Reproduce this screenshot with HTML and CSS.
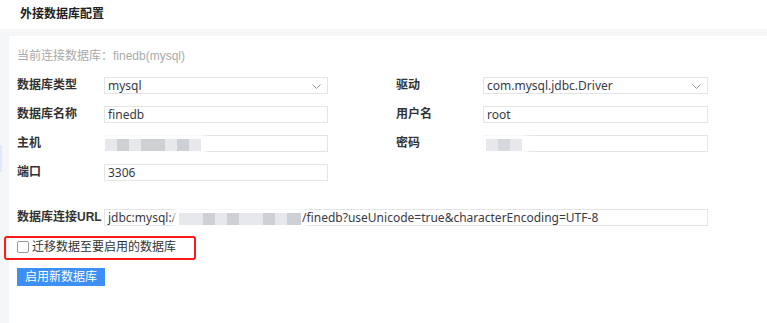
FILE: index.html
```html
<!doctype html>
<html>
<head>
<meta charset="utf-8">
<title>外接数据库配置</title>
<link rel="stylesheet" href="styles.css">
</head>
<body>
<div class="head">外接数据库配置</div>
<div class="wrap">
  <div class="side"><div class="side-mark"></div></div>
  <div class="panel">
    <div class="current">当前连接数据库：finedb(mysql)</div>
    <div class="form">
      <div class="lab">数据库类型</div>
      <div class="field sel">mysql<svg class="arrow" width="9" height="5" viewBox="0 0 9 5"><polyline points="0.5,0.5 4.5,4.5 8.5,0.5" fill="none" stroke="#9a9aa3" stroke-width="1"/></svg></div>
      <div></div>
      <div class="lab">驱动</div>
      <div class="field sel">com.mysql.jdbc.Driver<svg class="arrow" width="9" height="5" viewBox="0 0 9 5"><polyline points="0.5,0.5 4.5,4.5 8.5,0.5" fill="none" stroke="#9a9aa3" stroke-width="1"/></svg></div>

      <div class="lab">数据库名称</div>
      <div class="field">finedb</div>
      <div></div>
      <div class="lab">用户名</div>
      <div class="field">root</div>

      <div class="lab">主机</div>
      <div class="field"><span class="mosaic m-host"><i class="c1"></i><i class="c2"></i><i class="c1"></i><i class="c2"></i><i class="c2"></i><i class="c1"></i><i class="c3"></i><i class="c1"></i></span></div>
      <div></div>
      <div class="lab">密码</div>
      <div class="field"><span class="mosaic m-pass"><i class="c1"></i><i class="c4"></i><i class="c1"></i></span></div>

      <div class="lab">端口</div>
      <div class="field">3306</div>
    </div>
    <div class="form url-row">
      <div class="lab">数据库连接URL</div>
      <div class="field wide">jdbc:mysql:/<span class="mosaic m-url"><i class="c1"></i><i class="c1"></i><i class="c2"></i><i class="c1"></i><i class="c2"></i><i class="c1"></i><i class="c1"></i><i class="c2"></i><i class="c1"></i><i class="c3"></i></span>/finedb?useUnicode=true&amp;characterEncoding=UTF-8</div>
    </div>
    <div class="check-row">
      <span class="box"></span>迁移数据至要启用的数据库
      <div class="mark"></div>
    </div>
    <div class="btn">启用新数据库</div>
  </div>
</div>
</body>
</html>
```
FILE: styles.css
```css
body{
  margin:0;
  background:#f5f6f8;
  font-family:"Liberation Sans","Noto Sans CJK SC",sans-serif;
  font-size:12px;
  color:#333;
}
.head{
  height:29px;
  line-height:28px;
  padding-left:20px;
  background:#fff;
  font-weight:bold;
  color:#222;
}
.wrap{
  display:flex;
  margin-top:7px;
  height:287px;
}
.side{
  width:9px;
  flex:none;
}
.side-mark{
  width:2px;
  height:27px;
  margin-top:109px;
  background:#deeafb;
}
.panel{
  flex:1;
  background:#fff;
  padding:12px 8px 0 8px;
  position:relative;
}
.current{
  color:#aaa;
  line-height:17px;
}
.form{
  display:grid;
  grid-template-columns:87px 224px 68px 87px 225px;
  grid-auto-rows:17px;
  row-gap:12px;
  margin-top:12px;
}
.url-row{
  margin-top:28px;
}
.lab{
  font-weight:bold;
  color:#333;
  line-height:17px;
}
.field{
  box-sizing:border-box;
  border:1px solid #e3e5e9;
  padding:0 3px;
  line-height:15px;
  white-space:nowrap;
  position:relative;
  display:flex;
  align-items:center;
  color:#3a3a45;
  font-family:"Noto Sans","Noto Sans CJK SC",sans-serif;
  font-size:12px;
}
.wide{
  grid-column:2 / 6;
}
.arrow{
  position:absolute;
  right:6px;
  top:6px;
}
.mosaic{
  display:inline-flex;
  height:12px;
  margin-top:2px;
  box-shadow:0 0 5px 5px #fff;
  background:#fff;
}
.mosaic i{
  width:12px;
  height:12px;
  display:block;
}
.m-host{
  margin-left:-3px;
}
.m-pass{
  margin-left:-1px;
}
.m-url{
  margin:2px 1px 0 3px;
}
.m-url i:last-child{
  width:14px;
}
.c1{background:#e7e8eb;}
.c2{background:#cfd0d4;}
.c3{background:#cdd0d7;}
.c4{background:#d7d8dd;}
.check-row{
  margin-top:15px;
  height:12px;
  display:flex;
  align-items:center;
  line-height:12px;
  position:relative;
}
.box{
  box-sizing:border-box;
  width:12px;
  height:12px;
  border:1px solid #9b9b9b;
  border-radius:2px;
  margin-right:3px;
  background:#fff;
}
.mark{
  position:absolute;
  left:-13px;
  top:-5px;
  width:188px;
  height:20px;
  border:2px solid #ff1a1a;
  border-radius:3px;
}
.btn{
  display:inline-block;
  margin-top:15px;
  padding:0 8px;
  height:18px;
  line-height:18px;
  background:#3d8ef5;
  color:#fff;
}
```
